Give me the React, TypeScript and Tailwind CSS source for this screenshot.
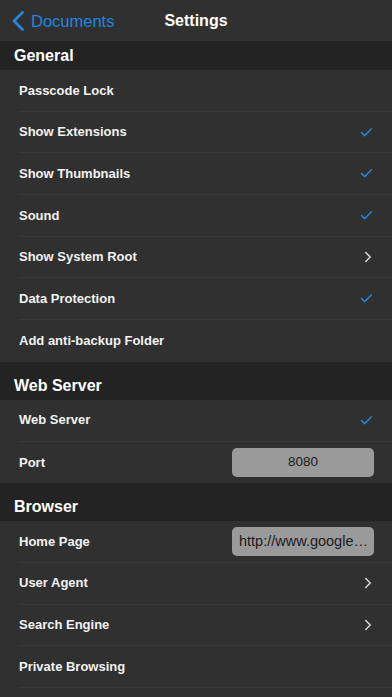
import { Check, ChevronRight } from "lucide-react";

type Row = {
    label: string;
    accessory?: "check" | "chevron";
    field?: string;
    fieldAlign?: "center" | "left";
};

type Section = {
    title: string;
    rows: Row[];
};

const sections: Section[] = [
    {
        title: "General",
        rows: [
            { label: "Passcode Lock" },
            { label: "Show Extensions", accessory: "check" },
            { label: "Show Thumbnails", accessory: "check" },
            { label: "Sound", accessory: "check" },
            { label: "Show System Root", accessory: "chevron" },
            { label: "Data Protection", accessory: "check" },
            { label: "Add anti-backup Folder" },
        ],
    },
    {
        title: "Web Server",
        rows: [
            { label: "Web Server", accessory: "check" },
            { label: "Port", field: "8080", fieldAlign: "center" },
        ],
    },
    {
        title: "Browser",
        rows: [
            { label: "Home Page", field: "http://www.google…", fieldAlign: "left" },
            { label: "User Agent", accessory: "chevron" },
            { label: "Search Engine", accessory: "chevron" },
            { label: "Private Browsing" },
            { label: "" },
        ],
    },
];

export default function App() {
    return (
        <div
            className="w-[392px] h-[697px] overflow-hidden bg-[#303030] text-white"
            style={{ fontFamily: '"Liberation Sans", Arial, sans-serif' }}
        >
            {/* Nav bar */}
            <div className="relative h-[41px] flex items-center bg-[#303030]">
                <div className="flex items-center pl-[12px] gap-[7px] text-[#1f87e0]">
                    <svg width="12" height="20" viewBox="0 0 12 20" fill="none">
                        <polyline
                            points="10.5,1.5 2,10 10.5,18.5"
                            stroke="currentColor"
                            strokeWidth="2.8"
                            strokeLinecap="round"
                            strokeLinejoin="round"
                        />
                    </svg>
                    <span className="text-[16.5px] leading-[20px]">Documents</span>
                </div>
                <span className="absolute left-0 right-0 text-center text-[16px] leading-[20px] font-bold pointer-events-none">
                    Settings
                </span>
            </div>

            {sections.map((section, i) => (
                <div key={section.title}>
                    <div
                        className={
                            i === 0
                                ? "h-[29px] flex items-center pl-[14px] bg-[#232323]"
                                : "h-[38px] flex items-end pb-[4px] pl-[14px] bg-[#232323]"
                        }
                    >
                        <span className="text-[16px] leading-[20px] font-bold">{section.title}</span>
                    </div>

                    {section.rows.map((row, j) => (
                        <div key={`${section.title}-${j}`} className="h-[41.7px] flex flex-col">
                            <div className="flex-1 flex items-center pl-[19px] pr-[19px]">
                                <span className="flex-1 text-[13px] font-bold text-[#f2f2f2]">{row.label}</span>

                                {row.accessory === "check" && (
                                    <Check size={15} strokeWidth={2.4} className="text-[#1f87e0] -mr-[1px]" />
                                )}
                                {row.accessory === "chevron" && (
                                    <ChevronRight size={18} strokeWidth={2} className="text-[#d8d8d8] -mr-[4px]" />
                                )}
                                {row.field && (
                                    <div
                                        className={
                                            row.fieldAlign === "center"
                                                ? "w-[142px] h-[29px] rounded-[5px] bg-[#9a9a9a] flex items-center justify-center text-[13.5px] text-[#1c1c1c] -mr-[1px]"
                                                : "w-[142px] h-[29px] rounded-[5px] bg-[#9a9a9a] flex items-center pl-[7px] text-[14.5px] text-[#1c1c1c] -mr-[1px] whitespace-nowrap overflow-hidden"
                                        }
                                    >
                                        {row.field}
                                    </div>
                                )}
                            </div>
                            {j < section.rows.length - 1 && (
                                <div className="ml-[19px] h-px bg-[#383838]" />
                            )}
                        </div>
                    ))}
                </div>
            ))}
        </div>
    );
}
